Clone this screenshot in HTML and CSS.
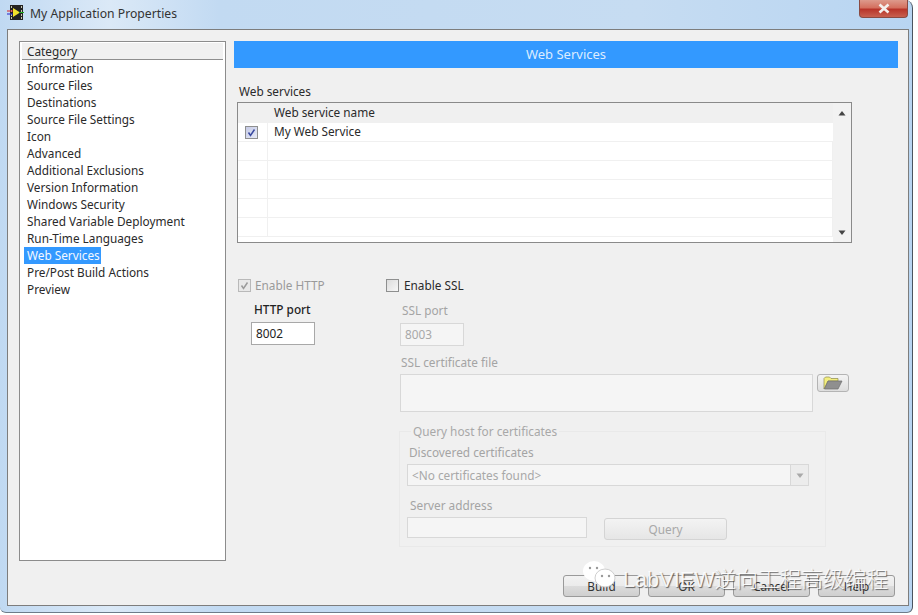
FILE: index.html
```html
<!DOCTYPE html>
<html lang="en">
<head>
  <meta charset="UTF-8" />
  <title>My Application Properties</title>
  <link rel="stylesheet" href="styles.css">
</head>
<body>
  <div class="window">
    <div class="titlebar">
      <svg class="app-icon" width="18" height="16" viewBox="0 0 18 16">
        <rect x="3" y="0" width="13" height="15" fill="#222"/>
        <path d="M4 1h1v2H4zM4 5h1v2H4zM4 9h1v2H4zM4 12h1v2H4zM14 1h1v2h-1zM14 5h1v2h-1zM14 9h1v2h-1zM14 12h1v2h-1z" fill="#c9c9b0"/>
        <path d="M6 3l7 4.500-7 4.500z" fill="#f2e22c"/>
        <path d="M0 6h6" stroke="#d22" stroke-width="1"/>
        <path d="M0 9h6" stroke="#22c" stroke-width="1"/>
        <path d="M12 7.500h5" stroke="#2a2" stroke-width="1"/>
      </svg>
      <span class="title-text">My Application Properties</span>
      <div class="close-btn">
        <svg width="14" height="11" viewBox="0 0 14 11">
          <path d="M2.500 1.500l9 8M11.500 1.500l-9 8" stroke="#f4f0ee" stroke-width="2.600"/>
        </svg>
      </div>
    </div>

    <div class="client">
      <div class="columns">
        <div class="sidebar">
          <div class="sidebar-head">Category</div>
          <ul class="cat-list">
            <li>Information</li>
            <li>Source Files</li>
            <li>Destinations</li>
            <li>Source File Settings</li>
            <li>Icon</li>
            <li>Advanced</li>
            <li>Additional Exclusions</li>
            <li>Version Information</li>
            <li>Windows Security</li>
            <li>Shared Variable Deployment</li>
            <li>Run-Time Languages</li>
            <li><span class="selected">Web Services</span></li>
            <li>Pre/Post Build Actions</li>
            <li>Preview</li>
          </ul>
        </div>

        <div class="main">
          <div class="banner">Web Services</div>
          <div class="table-label">Web services</div>
          <div class="svc-table">
            <div class="svc-grid">
              <div class="cell head"></div>
              <div class="cell head name">Web service name</div>
              <div class="cell check-cell"><span class="check checked"><svg width="9" height="9" viewBox="0 0 9 9"><path d="M1.500 4.500l2 3 4-6" fill="none" stroke="#3a4aa0" stroke-width="1.500"/></svg></span></div>
              <div class="cell name">My Web Service</div>
              <div class="cell"></div><div class="cell"></div>
              <div class="cell"></div><div class="cell"></div>
              <div class="cell"></div><div class="cell"></div>
              <div class="cell"></div><div class="cell"></div>
              <div class="cell"></div><div class="cell"></div>
            </div>
            <div class="scrollbar">
              <svg width="8" height="5" viewBox="0 0 8 5"><path d="M4 0l3.500 4.500h-7z" fill="#444"/></svg>
              <svg width="8" height="5" viewBox="0 0 8 5"><path d="M4 5L.5.500h7z" fill="#444"/></svg>
            </div>
          </div>

          <div class="options">
            <div class="http-col">
              <label class="check-row disabled">
                <span class="check dim"><svg width="9" height="9" viewBox="0 0 9 9"><path d="M1.500 4.500l2 3 4-6" fill="none" stroke="#9a9a9a" stroke-width="1.500"/></svg></span>
                Enable HTTP
              </label>
              <div class="http-port">
                <div class="port-label">HTTP port</div>
                <div class="field port-field">8002</div>
              </div>
            </div>

            <div class="ssl-col">
              <label class="check-row">
                <span class="check empty"></span>
                Enable SSL
              </label>
              <div class="ssl-body">
                <div class="dim-label ssl-port-label">SSL port</div>
                <div class="field port-field off">8003</div>
                <div class="dim-label cert-label">SSL certificate file</div>
                <div class="cert-row">
                  <div class="field cert-field off"></div>
                  <div class="folder-btn">
                    <svg width="20" height="14" viewBox="0 0 20 14">
                      <path d="M1 13V2.500L2.500 1h4L8 2.500h7V5H5L1 13z" fill="#f3ee7e" stroke="#8c8a4a" stroke-width=".7"/>
                      <path d="M1.500 13L5 5h14l-4 8z" fill="#8f8f8f" stroke="#6d6d6d" stroke-width=".7"/>
                    </svg>
                  </div>
                </div>
                <fieldset class="query-box">
                  <legend>Query host for certificates</legend>
                  <div class="dim-label disc-label">Discovered certificates</div>
                  <div class="field cert-select off">
                    <span class="select-text">&lt;No certificates found&gt;</span>
                    <span class="select-btn"><svg width="8" height="5" viewBox="0 0 8 5"><path d="M4 5L.5.500h7z" fill="#a9a9a9"/></svg></span>
                  </div>
                  <div class="dim-label addr-label">Server address</div>
                  <div class="addr-row">
                    <div class="field addr-field off"></div>
                    <div class="btn query-btn">Query</div>
                  </div>
                </fieldset>
              </div>
            </div>
          </div>
        </div>
      </div>

      <div class="footer">
        <div class="btn foot-btn">Build</div>
        <div class="btn foot-btn">OK</div>
        <div class="btn foot-btn">Cancel</div>
        <div class="btn foot-btn">Help</div>
      </div>
    </div>

    <!-- watermark over the dialog -->
    <div class="watermark">
      <svg width="34" height="30" viewBox="0 0 34 30">
        <ellipse cx="12" cy="11" rx="11" ry="10" fill="#fff"/>
        <ellipse cx="23" cy="18" rx="10" ry="9" fill="#fff" stroke="#cfcfcf" stroke-width="1"/>
        <circle cx="8" cy="8" r="1.200" fill="#999"/>
        <circle cx="15" cy="8" r="1.200" fill="#999"/>
        <circle cx="20" cy="16" r="1.200" fill="#999"/>
        <circle cx="27" cy="16" r="1.200" fill="#999"/>
      </svg>
      <span class="wm-text">LabVIEW逆向工程高级编程</span>
    </div>
  </div>
</body>
</html>
```

FILE: styles.css
```css
html, body {
  margin: 0;
  height: 100%;
  overflow: hidden;
  background: #fff;
}
body {
  font-family: "Noto Sans", "Open Sans", sans-serif;
  font-size: 11.8px;
  color: #2a2a2a;
}
.window {
  position: relative;
  width: 913px;
  height: 613px;
  box-sizing: border-box;
  padding: 0 4px 0 7px;
  background: linear-gradient(90deg, #c0d9f2 0%, #dbe9f7 12%, #c2daf2 24%, #c6dcf2 70%, #b8d5f2 100%);
  border-right: 1px solid #4a5560;
  border-bottom: 1px solid #6d7c8a;
  border-top-right-radius: 8px;
  border-bottom-right-radius: 6px;
  border-bottom-left-radius: 6px;
  display: flex;
  flex-direction: column;
}
.titlebar {
  height: 29px;
  flex: none;
  display: flex;
  align-items: flex-start;
}
.app-icon {
  margin-top: 5px;
}
.title-text {
  margin: 5px 0 0 5px;
  font-size: 12.2px;
  color: #333;
}
.close-btn {
  margin-left: auto;
  width: 49px;
  height: 18px;
  box-sizing: border-box;
  border: 1px solid #8a4a42;
  border-top: none;
  border-radius: 0 0 4px 4px;
  background: linear-gradient(#dd9a8c 0%, #d4705f 45%, #b8352a 55%, #c8604f 100%);
  display: flex;
  align-items: center;
  justify-content: center;
}

.client {
  width: 902px;
  height: 577px;
  flex: none;
  box-sizing: border-box;
  background: #f0f0f0;
  border: 1px solid #7d7d7d;
  padding: 11px 11px 0;
  display: flex;
  flex-direction: column;
}
.columns {
  display: flex;
  gap: 8px;
}

/* category list */
.sidebar {
  width: 207px;
  height: 520px;
  flex: none;
  box-sizing: border-box;
  background: #fff;
  border: 1px solid #8c8c8c;
  padding: 1px 2px;
}
.sidebar-head {
  height: 16px;
  line-height: 17px;
  padding-left: 5px;
  background: #f0f0f0;
  border-bottom: 1px solid #8e8e8e;
}
.cat-list {
  list-style: none;
  margin: 0;
  padding: 0 0 0 5px;
}
.cat-list li {
  height: 17px;
  line-height: 17px;
  white-space: nowrap;
}
.selected {
  display: inline-block;
  background: #3399ff;
  color: #f3f8ff;
  margin-left: -3px;
  padding: 0 1px 0 3px;
}

/* right pane */
.main {
  width: 664px;
  flex: none;
}
.banner {
  height: 27px;
  line-height: 26px;
  background: #3399ff;
  color: #dcecff;
  text-align: center;
  font-size: 13px;
}
.table-label {
  margin: 16px 0 2px 5px;
  height: 16px;
  line-height: 14px;
}
.svc-table {
  margin-left: 3px;
  width: 615px;
  height: 141px;
  box-sizing: border-box;
  background: #fff;
  border: 1px solid #8a8a8a;
  display: flex;
}
.svc-grid {
  flex: 1;
  display: grid;
  grid-template-columns: 30px 1fr;
  grid-template-rows: 20px repeat(6, 19px);
  overflow: hidden;
}
.cell {
  border-bottom: 1px solid #f0f0f0;
  border-right: 1px solid #f0f0f0;
  box-sizing: border-box;
}
.cell.head {
  background: #f0f0f0;
}
.cell.name {
  padding-left: 6px;
  line-height: 16px;
  border-right: none;
}
.cell.head.name {
  line-height: 18px;
}
.check-cell {
  display: flex;
  align-items: center;
  justify-content: center;
  padding-right: 2px;
}
.scrollbar {
  width: 18px;
  background: #f2f2f2;
  display: flex;
  flex-direction: column;
  justify-content: space-between;
  align-items: center;
  padding: 8px 0 7px;
  box-sizing: border-box;
}

.check {
  width: 13px;
  height: 13px;
  box-sizing: border-box;
  border: 1px solid #8e8f8f;
  background: linear-gradient(135deg, #d8d8e0, #f4f4f8);
  display: inline-flex;
  align-items: center;
  justify-content: center;
  flex: none;
}
.check.checked {
  background: linear-gradient(135deg, #c6cbe6, #e6e9f6);
}
.check.dim {
  border-color: #b9b9b9;
  background: #e8e8e8;
}
.check.empty {
  background: linear-gradient(135deg, #dcdcdc, #f7f7f7);
}

.options {
  display: flex;
  margin: 35px 0 0 4px;
}
.http-col {
  width: 148px;
  flex: none;
}
.check-row {
  display: flex;
  align-items: center;
  gap: 5px;
  height: 14px;
  line-height: 14px;
}
.check-row.disabled {
  color: #9a9a9a;
  gap: 4px;
}
.http-port {
  margin: 10px 0 0 13px;
}
.port-label {
  height: 16px;
  line-height: 14px;
  margin: 0 0 4px 3px;
  font-weight: 500;
  color: #222;
}
.field {
  box-sizing: border-box;
  border: 1px solid #a8a8a8;
  background: #fff;
  color: #222;
}
.port-field {
  width: 64px;
  height: 23px;
  line-height: 21px;
  padding-left: 4px;
}
.field.off {
  border-color: #d8d8d8;
  background: #f5f5f5;
  color: #a8a8a8;
}
.ssl-body {
  padding: 11px 0 0 14px;
}
.dim-label {
  height: 16px;
  line-height: 14px;
  color: #a4a4a4;
}
.ssl-port-label {
  margin: 0 0 4px 2px;
}
.cert-label {
  margin: 9px 0 3px 1px;
}
.cert-row {
  display: flex;
  gap: 4px;
  align-items: flex-start;
}
.cert-field {
  width: 413px;
  height: 38px;
}
.folder-btn {
  width: 32px;
  height: 18px;
  box-sizing: border-box;
  border: 1px solid #b4b4b4;
  border-radius: 3px;
  background: linear-gradient(#f4f4f4, #dedede);
  display: flex;
  align-items: center;
  justify-content: center;
}
.query-box {
  width: 427px;
  height: 124px;
  box-sizing: border-box;
  margin: 11px 0 0 -1px;
  padding: 0 0 0 7px;
  border: 1px solid #e9e9e9;
  min-width: 0;
}
.query-box legend {
  margin-left: 4px;
  padding: 0 2px;
  color: #a8a8a8;
  line-height: 16px;
}
.disc-label {
  margin: 5px 0 4px 2px;
  line-height: 16px;
}
.cert-select {
  width: 402px;
  height: 22px;
  display: flex;
  align-items: center;
  justify-content: space-between;
}
.select-text {
  padding-left: 4px;
}
.select-btn {
  width: 18px;
  height: 20px;
  box-sizing: border-box;
  border-left: 1px solid #d8d8d8;
  background: #ececec;
  display: flex;
  align-items: center;
  justify-content: center;
}
.addr-label {
  margin: 12px 0 3px 3px;
}
.addr-row {
  display: flex;
  gap: 17px;
}
.addr-field {
  width: 180px;
  height: 21px;
}
.btn {
  box-sizing: border-box;
  border: 1px solid #9a9a9a;
  border-radius: 3px;
  background: linear-gradient(#f2f2f2 0%, #ebebeb 50%, #dcdcdc 52%, #cfcfcf 100%);
  text-align: center;
}
.query-btn {
  width: 123px;
  height: 22px;
  line-height: 20px;
  margin-top: 1px;
  border-color: #d4d4d4;
  background: linear-gradient(#f3f3f3, #e6e6e6);
  color: #a8a8a8;
}
.footer {
  margin-top: 14px;
  display: flex;
  justify-content: flex-end;
  gap: 8px;
  padding-right: 2px;
}
.foot-btn {
  width: 77px;
  height: 22px;
  line-height: 20px;
  color: #333;
}

/* watermark */
.watermark {
  position: absolute;
  left: 582px;
  top: 557px;
  display: flex;
  align-items: center;
  gap: 7px;
}
.wm-text {
  font-family: "Liberation Sans", "Noto Sans CJK SC", sans-serif;
  font-size: 21.700px;
  font-weight: 300;
  margin-top: 5px;
  color: rgba(255, 255, 255, 0.92);
  text-shadow: 1px 1px 1px rgba(60, 60, 60, 0.75);
  white-space: nowrap;
}
```
